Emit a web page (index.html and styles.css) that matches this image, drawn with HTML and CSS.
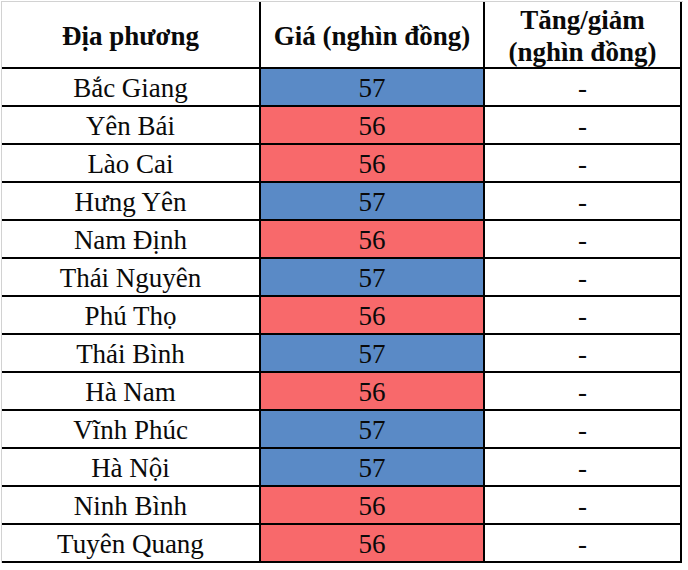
FILE: index.html
```html
<!DOCTYPE html>
<html lang="vi">
<head>
<meta charset="utf-8">
<link rel="stylesheet" href="styles.css">
</head>
<body>
<div class="frame">
  <div class="grid">
    <div class="cell head">Địa phương</div>
    <div class="cell head">Giá (nghìn đồng)</div>
    <div class="cell head">Tăng/giảm<br>(nghìn đồng)</div>

    <div class="cell">Bắc Giang</div><div class="cell blue">57</div><div class="cell">-</div>
    <div class="cell">Yên Bái</div><div class="cell red">56</div><div class="cell">-</div>
    <div class="cell">Lào Cai</div><div class="cell red">56</div><div class="cell">-</div>
    <div class="cell">Hưng Yên</div><div class="cell blue">57</div><div class="cell">-</div>
    <div class="cell">Nam Định</div><div class="cell red">56</div><div class="cell">-</div>
    <div class="cell">Thái Nguyên</div><div class="cell blue">57</div><div class="cell">-</div>
    <div class="cell">Phú Thọ</div><div class="cell red">56</div><div class="cell">-</div>
    <div class="cell">Thái Bình</div><div class="cell blue">57</div><div class="cell">-</div>
    <div class="cell">Hà Nam</div><div class="cell red">56</div><div class="cell">-</div>
    <div class="cell">Vĩnh Phúc</div><div class="cell blue">57</div><div class="cell">-</div>
    <div class="cell">Hà Nội</div><div class="cell blue">57</div><div class="cell">-</div>
    <div class="cell">Ninh Bình</div><div class="cell red">56</div><div class="cell">-</div>
    <div class="cell">Tuyên Quang</div><div class="cell red">56</div><div class="cell">-</div>
  </div>
</div>
</body>
</html>
```
FILE: styles.css
```css
html, body {
  margin: 0;
  padding: 0;
  background: #ffffff;
  font-family: "Liberation Serif", "Times New Roman", serif;
}
.frame {
  margin: 1px 0 0 1px;
  width: 681px;
  border-top: 1px solid #d2d2d2;
  border-left: 1px solid #d2d2d2;
}
.grid {
  display: grid;
  grid-template-columns: 257px 222px 195px;
  grid-template-rows: 65px repeat(13, 36px);
  gap: 2px;
  padding: 0 2px 2px 0;
  width: 678px;
  background: #000000;
  font-size: 27px;
  color: #0a0a0a;
}
.cell {
  background: #ffffff;
  display: flex;
  align-items: center;
  justify-content: center;
  text-align: center;
  line-height: 30px;
  padding-top: 1px;
}
.head {
  font-weight: bold;
  line-height: 32px;
  padding-top: 3px;
}
.blue {
  background: #5a8ac6;
}
.red {
  background: #f8696b;
}
```
